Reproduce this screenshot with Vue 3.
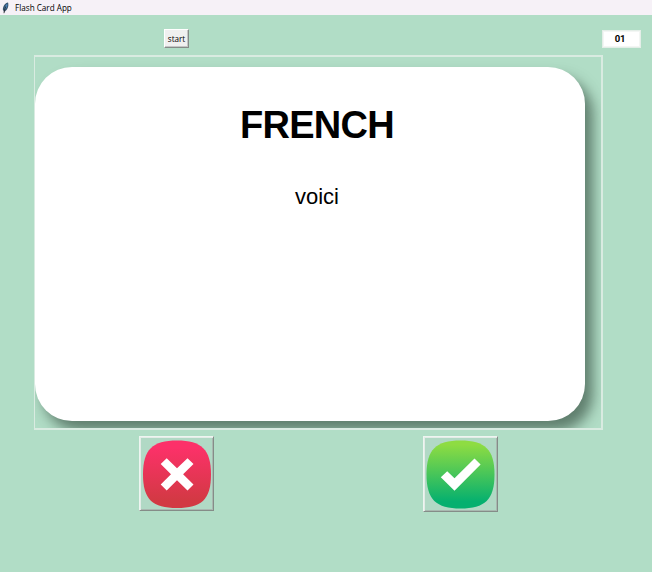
<script setup>
import { ref } from 'vue'

const language = ref('FRENCH')
const word = ref('voici')
const counter = ref('01')
</script>

<template>
  <div class="window">
    <header class="titlebar">
      <svg class="feather" width="8" height="12" viewBox="0 0 8 12">
        <path d="M6 .4C3.200 1 1 3.600 .8 7.600L2 9.800C5.400 8.400 7.200 3.800 6 .4Z" fill="#34516d" />
        <path d="M5.400 1.400C3.400 3 2.400 5.200 2.200 7.800C4.600 6.400 5.800 4 5.400 1.400Z" fill="#4c86c0" />
        <path d="M3.800 4.400C2.800 6.400 2.200 8.600 2 11.200" fill="none" stroke="#25292d" stroke-width=".9" />
      </svg>
      <span>Flash Card App</span>
    </header>
    <main class="content">
      <div class="toolbar">
        <button class="start">start</button>
        <div class="counter">{{ counter }}</div>
      </div>
      <section class="canvas">
        <div class="card">
          <h1>{{ language }}</h1>
          <p>{{ word }}</p>
        </div>
      </section>
      <div class="answers">
        <button class="answer" aria-label="Unknown">
          <svg width="69" height="69" viewBox="0 0 69 69">
            <defs>
              <linearGradient id="red" x1="0" y1="0" x2="0" y2="1">
                <stop offset=".1" stop-color="#fc3169" />
                <stop offset=".9" stop-color="#d23943" />
              </linearGradient>
            </defs>
            <path d="M34 .5C58.500 .5 68 9.500 68 34.500S58.500 68 34 68S0 59.500 0 34.500S9.500 .5 34 .5Z" fill="url(#red)" />
            <path d="M23.700 18.200L34 28.200L44.500 18.200L50.500 24.100L40.100 34.200L50.500 44.400L44.500 50.400L34 40.200L23.700 50.400L17.700 44.400L28 34.200L17.700 24.100Z" fill="#fff" />
          </svg>
        </button>
        <button class="answer known" aria-label="Known">
          <svg width="69" height="69" viewBox="0 0 69 69">
            <defs>
              <linearGradient id="green" x1="0" y1="0" x2="0" y2="1">
                <stop offset=".06" stop-color="#8edc42" />
                <stop offset=".9" stop-color="#05b06f" />
              </linearGradient>
            </defs>
            <path d="M34.500 .5C59 .5 68.500 9.500 68.500 34.500S59 68.500 34.500 68.500S.5 59.500 .5 34.500S10 .5 34.500 .5Z" fill="url(#green)" />
            <path d="M14.800 37.300L21.200 31.200L28.500 38.200L48.500 18.500L54.600 24.600L28.500 50.800Z" fill="#fff" />
          </svg>
        </button>
      </div>
    </main>
  </div>
</template>

<style>
body {
  margin: 0;
}
</style>

<style scoped>
.window {
  box-sizing: border-box;
  width: 652px;
  height: 572px;
  overflow: hidden;
  display: flex;
  flex-direction: column;
  background: #b1ddc6;
  color: #000;
  font-family: "Liberation Sans", Arial, sans-serif;
}

.titlebar {
  box-sizing: border-box;
  height: 15px;
  flex: none;
  display: flex;
  align-items: center;
  gap: 5px;
  padding-left: 2px;
  background: #f6f1f7;
  font: 8.150px/15px "Open Sans", sans-serif;
  color: #000;
}

.feather {
  display: block;
}

.content {
  display: flex;
  flex-direction: column;
}

.toolbar {
  display: flex;
  justify-content: space-between;
  align-items: flex-start;
  height: 40px;
  box-sizing: border-box;
  padding: 14px 11px 0 164px;
}

.start {
  box-sizing: border-box;
  width: 25px;
  height: 19px;
  padding: 0;
  border: 1px solid;
  border-color: #fff #858b88 #858b88 #fff;
  box-shadow: inset -1px -1px #c4c6c5;
  background: #f0f0f0;
  color: #000;
  font: 8.100px/17px "Open Sans", sans-serif;
}

.counter {
  box-sizing: border-box;
  width: 39px;
  height: 18px;
  margin-top: 1px;
  padding-right: 3px;
  border: 1px solid #e4eee8;
  box-shadow: inset 0 0 0 1px #f3f6f4;
  background: #fff;
  font: bold 9.500px/15px Roboto, sans-serif;
  letter-spacing: -0.2px;
  text-align: center;
}

.canvas {
  box-sizing: border-box;
  width: 569px;
  height: 375px;
  margin-left: 34px;
  padding-top: 10px;
  overflow: hidden;
  border: 2px solid #d9ebe1;
  border-left-width: 1px;
}

.card {
  box-sizing: border-box;
  width: 550px;
  height: 354px;
  padding-top: 36px;
  padding-left: 14px;
  border-radius: 37px;
  background: #fff;
  box-shadow: 8px 10px 13px rgb(45 68 55 / 62%);
  text-align: center;
}

h1 {
  margin: 0;
  font-size: 38px;
  line-height: 44px;
  letter-spacing: -0.7px;
}

p {
  margin: 37px 0 0;
  font-size: 22px;
  line-height: 26px;
}

.answers {
  display: flex;
  gap: 209px;
  padding: 6px 0 0 139px;
}

.answer {
  box-sizing: border-box;
  width: 75px;
  height: 75px;
  padding: 3px 2px 2px 3px;
  border: 1px solid;
  border-color: #eef5f1 #858c88 #858c88 #eef5f1;
  box-shadow: inset 1px 1px #e3ece7, inset -1px -1px #a9b8b0;
  background: #b1d9c5;
}

.known {
  height: 76px;
  padding-left: 2px;
}

.answer svg {
  display: block;
}
</style>
